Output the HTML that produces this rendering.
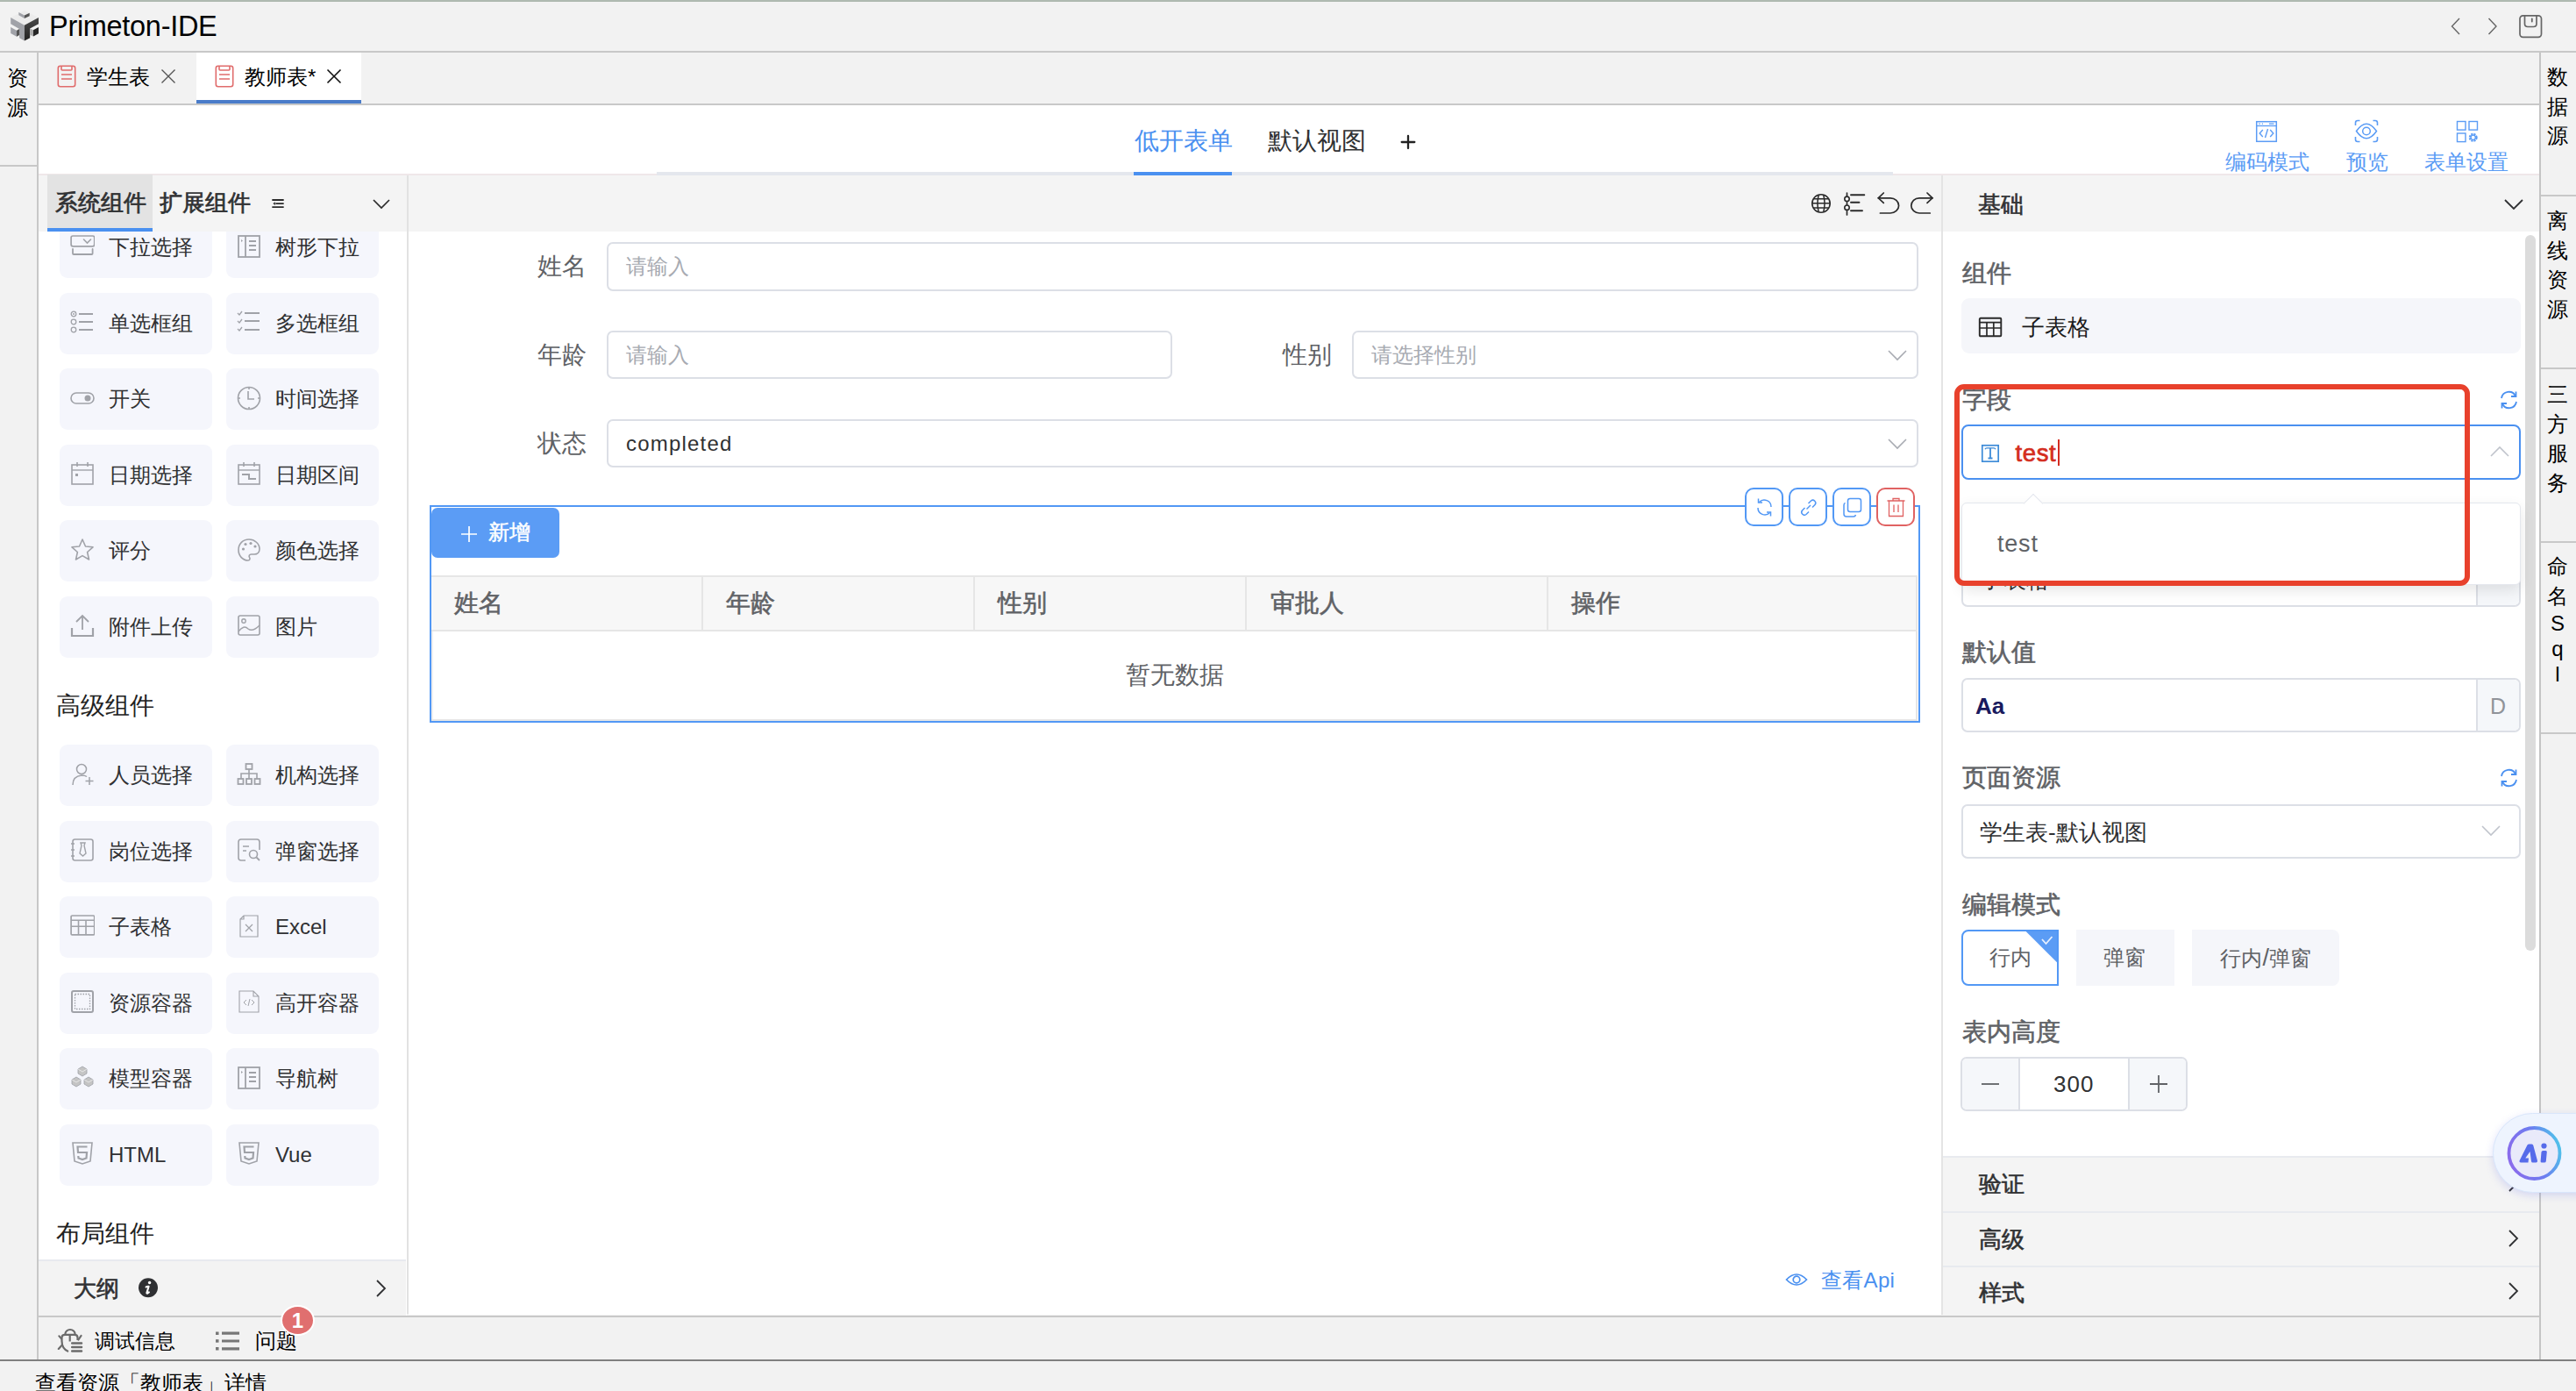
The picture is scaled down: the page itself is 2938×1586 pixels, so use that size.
<!DOCTYPE html>
<html><head><meta charset="utf-8">
<style>
*{box-sizing:border-box;margin:0;padding:0}
html,body{width:2938px;height:1586px;overflow:hidden;background:#f2f2f2;font-family:"Liberation Sans",sans-serif;color:#303133}
.a{position:absolute}
svg{display:block}
.vt{writing-mode:vertical-rl;text-orientation:upright}
.card{position:absolute;width:174px;height:70px;background:#f5f6fc;border-radius:9px}
.card svg{position:absolute;left:12px;top:19.5px}
.card span{position:absolute;left:56px;top:18px;font-size:24px;line-height:34px;color:#303133;white-space:nowrap}
.inp{position:absolute;border:2px solid #dcdfe6;border-radius:7px;background:#fff}
.lbl{position:absolute;font-size:26px;line-height:30px;color:#606266;white-space:nowrap}
.md{-webkit-text-stroke:0.6px currentColor}
.rl{position:absolute;font-size:26px;line-height:30px;color:#606266;font-weight:bold;white-space:nowrap}
</style></head><body>
<!-- top line -->
<div class="a" style="left:0;top:0;width:2938px;height:1px;background:#b1bbb3"></div><div class="a" style="left:0;top:1px;width:2938px;height:1px;background:#a9b5ab"></div>
<!-- title bar -->
<div class="a" style="left:0;top:2px;width:2938px;height:56px;background:#f2f2f2"></div>
<div class="a" style="left:0;top:58px;width:2938px;height:2px;background:#c8c8c8"></div>

<!-- left sidebar -->
<div class="a" style="left:42px;top:60px;width:2px;height:1490px;background:#c8c8c8"></div>
<div class="a" style="left:0;top:188px;width:42px;height:2px;background:#c8c8c8"></div>

<!-- tabs row -->
<div class="a" style="left:44px;top:118px;width:2852px;height:2px;background:#c8c8c8"></div>
<div class="a" style="left:224px;top:60px;width:188px;height:58px;background:#fff"></div>
<div class="a" style="left:224px;top:114px;width:188px;height:4px;background:#4a7cc9"></div>

<!-- main white header area -->
<div class="a" style="left:44px;top:120px;width:2852px;height:79px;background:#fff"></div>

<!-- right sidebar -->
<div class="a" style="left:2896px;top:60px;width:2px;height:1490px;background:#c4c4c4"></div>

<!-- left panel -->
<div class="a" style="left:44px;top:199px;width:420px;height:1301px;background:#fff"></div>
<div class="a" style="left:44px;top:199px;width:420px;height:65px;background:#f4f4f4"></div>
<div class="a" style="left:464px;top:199px;width:2px;height:1299px;background:#e2e2e2"></div>

<!-- center panel -->
<div class="a" style="left:466px;top:199px;width:1748px;height:1300px;background:#fff"></div>
<div class="a" style="left:466px;top:199px;width:1748px;height:65px;background:#f4f4f4"></div>
<div class="a" style="left:2214px;top:199px;width:2px;height:1300px;background:#e4e4e4"></div>

<!-- right panel -->
<div class="a" style="left:2216px;top:199px;width:680px;height:1300px;background:#fff"></div>
<div class="a" style="left:2216px;top:199px;width:680px;height:65px;background:#f4f4f4"></div>

<!-- bottom panel -->
<div class="a" style="left:44px;top:1500px;width:2852px;height:2px;background:#c8c8c8"></div>
<div class="a" style="left:0;top:1550px;width:2938px;height:2px;background:#808080"></div>


<!-- ===== TITLE BAR CONTENT ===== -->
<svg class="a" style="left:0;top:0" width="50" height="50" viewBox="0 0 50 50">
  <defs><linearGradient id="lgr" x1="0" y1="0" x2="0" y2="1"><stop offset="0" stop-color="#4a4a4a"/><stop offset="1" stop-color="#222"/></linearGradient></defs>
  <polygon points="12.2,20.1 27.9,11.9 44,20.1 27.9,28.8" fill="#ececec"/>
  <polygon points="21.3,14 27.9,17.5 27.9,21 21.3,17.3" fill="#a0a2a8"/>
  <polygon points="27.9,17.5 33.7,14.8 33.7,18.2 27.9,21" fill="#555"/>
  <polygon points="12.2,20.1 27.9,28.8 27.9,46.4 22.1,43.3 22.1,33 12.2,27.2" fill="#a0a2a8"/>
  <polygon points="12.2,31 19,34.7 19,41.7 12.2,38" fill="#a0a2a8"/>
  <polygon points="19,34.7 22.1,33 22.1,40 19,41.7" fill="#555"/>
  <polygon points="27.9,28.8 44,20.1 44,27.3 34.2,32.6 34.2,43.3 27.9,46.4" fill="url(#lgr)"/>
  <polygon points="34.2,32.6 38,34.3 38,41.6 34.2,39.8" fill="#aaa"/>
  <polygon points="38,34.3 44,31 44,38.2 38,41.6" fill="#262626"/>
</svg>
<div class="a" style="left:56px;top:10px;font-size:32.5px;line-height:40px;color:#000;letter-spacing:-0.3px">Primeton-IDE</div>
<!-- nav arrows & save -->
<svg class="a" style="left:2794px;top:19px" width="14" height="22" viewBox="0 0 14 22"><path d="M11 2 L2.5 11 L11 20" fill="none" stroke="#666" stroke-width="1.4"/></svg>
<svg class="a" style="left:2836px;top:19px" width="14" height="22" viewBox="0 0 14 22"><path d="M2.5 2 L11 11 L2.5 20" fill="none" stroke="#666" stroke-width="1.4"/></svg>
<svg class="a" style="left:2872px;top:16px" width="28" height="28" viewBox="0 0 28 28"><rect x="2" y="1.8" width="24.5" height="24.5" rx="3.5" fill="none" stroke="#666" stroke-width="1.7"/><path d="M7.5 1.8 V11 Q7.5 14.5 11 14.5 H17.5 Q21 14.5 21 11 V1.8" fill="none" stroke="#666" stroke-width="1.7"/><path d="M15.8 5.5 V8.5" stroke="#666" stroke-width="1.8" stroke-linecap="round"/></svg>
<!-- left sidebar text -->
<div class="a" style="left:7px;top:72px;width:26px;font-size:24px;line-height:33.5px;color:#000;text-align:center">资<br>源</div>

<!-- ===== TABS ===== -->
<svg class="a" style="left:65px;top:74px" width="22" height="26" viewBox="0 0 22 26"><rect x="1.3" y="1.3" width="19.4" height="23.4" rx="2.5" fill="none" stroke="#e06c6c" stroke-width="1.6"/><path d="M5 1.3 V5 Q5 6 6 6 H16 Q17 6 17 5 V1.3" fill="none" stroke="#e06c6c" stroke-width="1.6"/><path d="M5 11 H17 M5 16 H17" stroke="#e06c6c" stroke-width="1.6"/></svg>
<div class="a" style="left:99px;top:68px;font-size:24px;line-height:40px;color:#000">学生表</div>
<svg class="a" style="left:183px;top:78px" width="18" height="18" viewBox="0 0 18 18"><path d="M1.5 1.5 L16.5 16.5 M16.5 1.5 L1.5 16.5" stroke="#555" stroke-width="1.4"/></svg>
<svg class="a" style="left:245px;top:74px" width="22" height="26" viewBox="0 0 22 26"><rect x="1.3" y="1.3" width="19.4" height="23.4" rx="2.5" fill="none" stroke="#e06c6c" stroke-width="1.6"/><path d="M5 1.3 V5 Q5 6 6 6 H16 Q17 6 17 5 V1.3" fill="none" stroke="#e06c6c" stroke-width="1.6"/><path d="M5 11 H17 M5 16 H17" stroke="#e06c6c" stroke-width="1.6"/></svg>
<div class="a" style="left:279px;top:68px;font-size:24px;line-height:40px;color:#000">教师表*</div>
<svg class="a" style="left:372px;top:78px" width="18" height="18" viewBox="0 0 18 18"><path d="M1.5 1.5 L16.5 16.5 M16.5 1.5 L1.5 16.5" stroke="#111" stroke-width="1.6"/></svg>

<!-- right sidebar text -->
<div class="a" style="left:2903px;top:71px;width:28px;font-size:24px;line-height:33.5px;color:#000;text-align:center">数<br>据<br>源</div>
<div class="a" style="left:2898px;top:222px;width:40px;height:2px;background:#c8c8c8"></div>
<div class="a" style="left:2903px;top:235px;width:28px;font-size:24px;line-height:33.5px;color:#000;text-align:center">离<br>线<br>资<br>源</div>
<div class="a" style="left:2898px;top:419px;width:40px;height:2px;background:#c8c8c8"></div>
<div class="a" style="left:2903px;top:433px;width:28px;font-size:24px;line-height:33.5px;color:#000;text-align:center">三<br>方<br>服<br>务</div>
<div class="a" style="left:2898px;top:617px;width:40px;height:2px;background:#c8c8c8"></div>
<div class="a" style="left:2903px;top:629px;width:28px;font-size:24px;line-height:33.5px;color:#000;text-align:center">命<br>名</div><div class="a" style="left:2903px;top:696px;width:28px;font-size:24px;line-height:29px;color:#000;text-align:center">S<br>q<br>l</div>
<div class="a" style="left:2898px;top:835px;width:40px;height:2px;background:#c8c8c8"></div>

<!-- ===== FORM HEADER ===== -->
<div class="a" style="left:44px;top:198px;width:2852px;height:2px;background:#efe7e9"></div>
<div class="a" style="left:749px;top:196px;width:1410px;height:4px;background:#e4e7ed"></div>
<div class="a" style="left:1293.5px;top:140.5px;font-size:28px;line-height:40px;color:#4a90f0">低开表单</div>
<div class="a" style="left:1293px;top:196px;width:112px;height:4px;background:#4a90f0"></div>
<div class="a" style="left:1445.5px;top:140.5px;font-size:28px;line-height:40px;color:#303133">默认视图</div>
<svg class="a" style="left:1597px;top:153px" width="18" height="18" viewBox="0 0 18 18"><path d="M9 2 V16 M1.7 9 H16.3" stroke="#222" stroke-width="2.3" stroke-linecap="round"/></svg>

<!-- header right icons -->
<svg class="a" style="left:2572px;top:137px" width="26" height="26" viewBox="0 0 26 26"><rect x="1.7" y="1.7" width="22.6" height="22.6" fill="none" stroke="#5b9cf5" stroke-width="1.5"/><path d="M1.7 6.5 H24.3" stroke="#5b9cf5" stroke-width="1.3"/><path d="M4.3 4.1 H5.8 M7.8 4.1 H9 M16 4.1 H21.5" stroke="#5b9cf5" stroke-width="1.3"/><path d="M8.8 11 L5.2 15 L8.8 19 M17.2 11 L20.8 15 L17.2 19 M14.5 10 L11.5 20" fill="none" stroke="#5b9cf5" stroke-width="1.4"/></svg>
<div class="a" style="left:2537.5px;top:164.5px;font-size:24px;line-height:40px;color:#5b9cf5">编码模式</div>
<svg class="a" style="left:2685px;top:135.5px" width="28" height="27" viewBox="0 0 28 27"><path d="M1.5 7 V4 Q1.5 1.5 4 1.5 H6.5 M21.5 1.5 H24 Q26.5 1.5 26.5 4 V7 M26.5 20 V23 Q26.5 25.5 24 25.5 H21.5 M6.5 25.5 H4 Q1.5 25.5 1.5 23 V20" fill="none" stroke="#5b9cf5" stroke-width="1.6"/><path d="M2.5 13.5 Q14 -3 25.5 13.5 Q14 30 2.5 13.5 Z" fill="none" stroke="#5b9cf5" stroke-width="1.5"/><circle cx="14" cy="13.5" r="4.3" fill="none" stroke="#5b9cf5" stroke-width="1.5"/></svg>
<div class="a" style="left:2675.5px;top:164.5px;font-size:24px;line-height:40px;color:#5b9cf5">预览</div>
<svg class="a" style="left:2801px;top:137px" width="26" height="26" viewBox="0 0 26 26"><rect x="1.5" y="1.5" width="9.5" height="9.6" fill="none" stroke="#5b9cf5" stroke-width="1.4"/><rect x="15" y="1.5" width="9.5" height="9.6" fill="none" stroke="#5b9cf5" stroke-width="1.4"/><rect x="1.5" y="15" width="9.5" height="9.6" fill="none" stroke="#5b9cf5" stroke-width="1.4"/><circle cx="19.7" cy="19.8" r="3.9" fill="none" stroke="#5b9cf5" stroke-width="2.2" stroke-dasharray="2.1 1"/><circle cx="19.7" cy="19.8" r="2.6" fill="none" stroke="#5b9cf5" stroke-width="1.3"/></svg>
<div class="a" style="left:2765px;top:164.5px;font-size:24px;line-height:40px;color:#5b9cf5">表单设置</div>

<!-- ===== LEFT PANEL CONTENT ===== -->
<div class="a" style="left:44px;top:264px;width:419px;height:1172px;overflow:hidden">
<div class="card" style="left:24px;top:-17px"><svg width="28" height="28" viewBox="0 0 28 28"><rect x="1.1" y="2" width="26.6" height="11.8" rx="2" fill="none" stroke="#a0a2a8" stroke-width="1.7"/><path d="M15.5 6 L19.5 10 L23.5 6" fill="none" stroke="#a0a2a8" stroke-width="1.6" stroke-linecap="round"/><path d="M3 17 V22 Q3 23 4 23 H24.6 Q25.6 23 25.6 22 V17" fill="none" stroke="#a0a2a8" stroke-width="1.8" stroke-linecap="round"/></svg><span>下拉选择</span></div>
<div class="card" style="left:214px;top:-17px"><svg width="28" height="28" viewBox="0 0 28 28"><rect x="2" y="2" width="24" height="24" fill="none" stroke="#a0a2a8" stroke-width="1.8"/><path d="M10 2 V26" stroke="#a0a2a8" stroke-width="1.8"/><path d="M5 6 L7 7.5 L5 9 Z" fill="#a0a2a8"/><path d="M14 8 H22 M14 13 H22 M14 18 H22" stroke="#a0a2a8" stroke-width="1.8"/></svg><span>树形下拉</span></div>
<div class="card" style="left:24px;top:69.5px"><svg width="28" height="28" viewBox="0 0 28 28"><circle cx="4" cy="5" r="2.8" fill="none" stroke="#a0a2a8" stroke-width="1.3"/><circle cx="4" cy="5" r="1" fill="#a0a2a8"/><circle cx="4" cy="14" r="2.8" fill="none" stroke="#a0a2a8" stroke-width="1.3"/><circle cx="4" cy="23" r="2.8" fill="none" stroke="#a0a2a8" stroke-width="1.3"/><path d="M10 5 H26 M10 14 H26 M10 23 H26" stroke="#a0a2a8" stroke-width="1.8"/></svg><span>单选框组</span></div>
<div class="card" style="left:214px;top:69.5px"><svg width="28" height="28" viewBox="0 0 28 28"><path d="M1 4 L3 6 L6 2 M1 13 L3 15 L6 11 M1 22 L3 24 L6 20" fill="none" stroke="#a0a2a8" stroke-width="1.3"/><path d="M9 4 H26 M9 13 H26 M9 23 H26" stroke="#a0a2a8" stroke-width="1.8"/></svg><span>多选框组</span></div>
<div class="card" style="left:24px;top:156px"><svg width="28" height="28" viewBox="0 0 28 28"><rect x="1" y="8" width="26" height="12" rx="6" fill="none" stroke="#a0a2a8" stroke-width="1.6"/><circle cx="20" cy="14" r="3.5" fill="#a0a2a8"/></svg><span>开关</span></div>
<div class="card" style="left:214px;top:156px"><svg width="28" height="28" viewBox="0 0 28 28"><circle cx="14" cy="14" r="12.5" fill="none" stroke="#a0a2a8" stroke-width="1.6"/><path d="M13 6 V15 H20" fill="none" stroke="#a0a2a8" stroke-width="1.6"/><path d="M14 1.5 V4 M14 24 V26.5 M1.5 14 H4 M24 14 H26.5" stroke="#a0a2a8" stroke-width="1.6"/></svg><span>时间选择</span></div>
<div class="card" style="left:24px;top:242.5px"><svg width="28" height="28" viewBox="0 0 28 28"><rect x="2" y="4" width="24" height="22" fill="none" stroke="#a0a2a8" stroke-width="1.6"/><path d="M2 10 H26" stroke="#a0a2a8" stroke-width="1.4"/><path d="M8 1 V6 M20 1 V6" stroke="#a0a2a8" stroke-width="1.6"/><rect x="6" y="14" width="3" height="3" fill="#a0a2a8"/></svg><span>日期选择</span></div>
<div class="card" style="left:214px;top:242.5px"><svg width="28" height="28" viewBox="0 0 28 28"><rect x="2" y="4" width="24" height="22" fill="none" stroke="#a0a2a8" stroke-width="1.6"/><path d="M2 10 H26" stroke="#a0a2a8" stroke-width="1.4"/><path d="M8 1 V6 M20 1 V6" stroke="#a0a2a8" stroke-width="1.6"/><path d="M6 15 H14 V20 H22" fill="none" stroke="#a0a2a8" stroke-width="2"/></svg><span>日期区间</span></div>
<div class="card" style="left:24px;top:329px"><svg width="28" height="28" viewBox="0 0 28 28"><path d="M14 2 L17.5 10 L26 10.8 L19.6 16.5 L21.5 25 L14 20.6 L6.5 25 L8.4 16.5 L2 10.8 L10.5 10 Z" fill="none" stroke="#a0a2a8" stroke-width="1.6" stroke-linejoin="round"/></svg><span>评分</span></div>
<div class="card" style="left:214px;top:329px"><svg width="28" height="28" viewBox="0 0 28 28"><path d="M14 2 C7 2 2 7 2 14 C2 21 7 26 13 26 C15 26 15.5 24 14.5 22.5 C13.5 21 14.5 19 16.5 19 H20 C23.5 19 26 16.5 26 13 C26 7 20.5 2 14 2 Z" fill="none" stroke="#a0a2a8" stroke-width="1.6"/><circle cx="7.5" cy="13" r="1.6" fill="#a0a2a8"/><circle cx="10" cy="7.5" r="1.6" fill="#a0a2a8"/><circle cx="16" cy="6.5" r="1.6" fill="#a0a2a8"/><circle cx="21" cy="10" r="1.6" fill="#a0a2a8"/></svg><span>颜色选择</span></div>
<div class="card" style="left:24px;top:415.5px"><svg width="28" height="28" viewBox="0 0 28 28"><path d="M14 3 V19 M7 10 L14 3 L21 10" fill="none" stroke="#a0a2a8" stroke-width="1.8"/><path d="M2 17 V26 H26 V17" fill="none" stroke="#a0a2a8" stroke-width="2.2"/></svg><span>附件上传</span></div>
<div class="card" style="left:214px;top:415.5px"><svg width="28" height="28" viewBox="0 0 28 28"><rect x="2" y="3" width="24" height="22" rx="2" fill="none" stroke="#a0a2a8" stroke-width="1.6"/><circle cx="8" cy="9" r="2.2" fill="none" stroke="#a0a2a8" stroke-width="1.4"/><path d="M2 21 Q8 13 13 18 Q18 22 26 14" fill="none" stroke="#a0a2a8" stroke-width="1.4"/></svg><span>图片</span></div>
<div class="card" style="left:24px;top:585px"><svg width="28" height="28" viewBox="0 0 28 28"><circle cx="13" cy="8" r="5.5" fill="none" stroke="#a0a2a8" stroke-width="1.5"/><path d="M3 26 Q3 16 13 15 Q17 15 19 16.5" fill="none" stroke="#a0a2a8" stroke-width="1.5"/><path d="M22 17 V26 M17.5 21.5 H26.5" stroke="#a0a2a8" stroke-width="1.5"/></svg><span>人员选择</span></div>
<div class="card" style="left:214px;top:585px"><svg width="28" height="28" viewBox="0 0 28 28"><rect x="10.5" y="2" width="7" height="6" fill="none" stroke="#a0a2a8" stroke-width="1.8"/><path d="M14 8 V13 M5 19 V13 H23 V19 M14 13 V19" fill="none" stroke="#a0a2a8" stroke-width="1.6"/><rect x="1.5" y="19" width="6" height="6" fill="none" stroke="#a0a2a8" stroke-width="1.8"/><rect x="11" y="19" width="6" height="6" fill="none" stroke="#a0a2a8" stroke-width="1.8"/><rect x="20.5" y="19" width="6" height="6" fill="none" stroke="#a0a2a8" stroke-width="1.8"/></svg><span>机构选择</span></div>
<div class="card" style="left:24px;top:671.5px"><svg width="28" height="28" viewBox="0 0 28 28"><rect x="3" y="2" width="23" height="24" rx="2.5" fill="none" stroke="#a0a2a8" stroke-width="1.6"/><path d="M1 7 H5 M1 14 H5 M1 21 H5" stroke="#a0a2a8" stroke-width="1.4"/><path d="M12 6 H17 L16 9 L18 18 L14.5 21 L11 18 L13 9 Z" fill="none" stroke="#a0a2a8" stroke-width="1.4"/></svg><span>岗位选择</span></div>
<div class="card" style="left:214px;top:671.5px"><svg width="28" height="28" viewBox="0 0 28 28"><path d="M26 14 V5 Q26 2 23 2 H5 Q2 2 2 5 V23 Q2 26 5 26 H10" fill="none" stroke="#a0a2a8" stroke-width="1.6"/><path d="M7 10 H14 M7 15 H11" stroke="#a0a2a8" stroke-width="1.6"/><circle cx="19" cy="19" r="4.5" fill="none" stroke="#a0a2a8" stroke-width="1.6"/><path d="M22.5 22.5 L26 26" stroke="#a0a2a8" stroke-width="1.8"/></svg><span>弹窗选择</span></div>
<div class="card" style="left:24px;top:758px"><svg width="28" height="28" viewBox="0 0 28 28"><rect x="1.1" y="2" width="26.6" height="21.9" rx="1.2" fill="none" stroke="#a0a2a8" stroke-width="1.7"/><path d="M1.1 7.3 H27.7 M1.1 14.2 H27.7 M9.5 7.3 V23.9 M18 7.3 V23.9" stroke="#a0a2a8" stroke-width="1.6"/></svg><span>子表格</span></div>
<div class="card" style="left:214px;top:758px"><svg width="28" height="28" viewBox="0 0 28 28"><path d="M8 2 H24 V26 H4 V6 Z M4 6 H8 V2" fill="none" stroke="#a0a2a8" stroke-width="1.2"/><path d="M10 12 L18 20 M18 12 L10 20" stroke="#a0a2a8" stroke-width="1.2"/></svg><span>Excel</span></div>
<div class="card" style="left:24px;top:844.5px"><svg width="28" height="28" viewBox="0 0 28 28"><rect x="2" y="2" width="24" height="24" rx="2" fill="none" stroke="#a0a2a8" stroke-width="2"/><rect x="5.5" y="5.5" width="17" height="17" fill="none" stroke="#a0a2a8" stroke-width="1.3" stroke-dasharray="1.5 1.5"/></svg><span>资源容器</span></div>
<div class="card" style="left:214px;top:844.5px"><svg width="28" height="28" viewBox="0 0 28 28"><path d="M3 2 H19 L25 8 V26 H3 Z M19 2 V8 H25" fill="none" stroke="#a0a2a8" stroke-width="1.1"/><path d="M11 12 L8 15 L11 18 M17 12 L20 15 L17 18 M15 11 L13 19" fill="none" stroke="#a0a2a8" stroke-width="1"/></svg><span>高开容器</span></div>
<div class="card" style="left:24px;top:931px"><svg width="28" height="28" viewBox="0 0 28 28"><path d="M14 1 L19 4 V9 L14 12 L9 9 V4 Z" fill="#c4c4c4" stroke="#a0a2a8" stroke-width="0.8"/><path d="M7 13 L12 16 V21 L7 24 L2 21 V16 Z" fill="#c4c4c4" stroke="#a0a2a8" stroke-width="0.8"/><path d="M21 13 L26 16 V21 L21 24 L16 21 V16 Z" fill="#c4c4c4" stroke="#a0a2a8" stroke-width="0.8"/><path d="M9 4 L14 7 L19 4 M2 16 L7 19 L12 16 M16 16 L21 19 L26 16" fill="none" stroke="#eee" stroke-width="0.8"/></svg><span>模型容器</span></div>
<div class="card" style="left:214px;top:931px"><svg width="28" height="28" viewBox="0 0 28 28"><rect x="2" y="2" width="24" height="24" fill="none" stroke="#a0a2a8" stroke-width="1.8"/><path d="M10 2 V26" stroke="#a0a2a8" stroke-width="1.8"/><path d="M5 6 L7 7.5 L5 9 Z" fill="#a0a2a8"/><path d="M14 8 H22 M14 13 H22 M14 18 H22" stroke="#a0a2a8" stroke-width="1.8"/></svg><span>导航树</span></div>
<div class="card" style="left:24px;top:1017.5px"><svg width="28" height="28" viewBox="0 0 28 28"><path d="M3 2 H25 L23 23 L14 26 L5 23 Z" fill="none" stroke="#a0a2a8" stroke-width="1.6"/><path d="M19.5 6.5 H8.5 L9 13 H19 L18.5 19.5 L14 21 L9.5 19.5 L9.3 17" fill="none" stroke="#a0a2a8" stroke-width="2.2"/></svg><span>HTML</span></div>
<div class="card" style="left:214px;top:1017.5px"><svg width="28" height="28" viewBox="0 0 28 28"><path d="M3 2 H25 L23 23 L14 26 L5 23 Z" fill="none" stroke="#a0a2a8" stroke-width="1.6"/><path d="M19.5 6.5 H8.5 L9 13 H19 L18.5 19.5 L14 21 L9.5 19.5 L9.3 17" fill="none" stroke="#a0a2a8" stroke-width="2.2"/></svg><span>Vue</span></div>
<div class="a" style="left:20px;top:521px;font-size:28px;line-height:40px;color:#222">高级组件</div>
<div class="a" style="left:20px;top:1123px;font-size:28px;line-height:40px;color:#222">布局组件</div>
</div>
<div class="a" style="left:54px;top:199px;width:120px;height:61px;background:#e3e3e3"></div>
<div class="a" style="left:54px;top:260px;width:120px;height:4px;background:#4a90f0"></div>
<div class="a" style="left:63px;top:211px;font-size:26px;line-height:40px;color:#303133;-webkit-text-stroke:0.7px #303133">系统组件</div>
<div class="a" style="left:182px;top:211px;font-size:26px;line-height:40px;color:#303133;-webkit-text-stroke:0.7px #303133">扩展组件</div>
<svg class="a" style="left:310px;top:226px" width="15" height="12" viewBox="0 0 15 12"><path d="M1 2 H13 M5 6.1 H13 M1 10.1 H13" stroke="#2b2b2b" stroke-width="1.8" stroke-linecap="round"/><path d="M1.3 6.1 L3.8 4.3 V7.9 Z" fill="#2b2b2b"/></svg>
<svg class="a" style="left:423.5px;top:225.5px" width="22" height="14" viewBox="0 0 22 14"><path d="M2 2 L11 11 L20 2" fill="none" stroke="#2b2b2b" stroke-width="1.7"/></svg>
<div class="a" style="left:44px;top:1436px;width:419px;height:64px;background:#f3f3f3;border-top:2px solid #e8eaef"></div>
<div class="a" style="left:84px;top:1449px;font-size:26px;line-height:40px;color:#303133;-webkit-text-stroke:0.6px #303133">大纲</div>
<svg class="a" style="left:157px;top:1457px" width="24" height="24" viewBox="0 0 24 24"><circle cx="12" cy="11.2" r="11" fill="#2f3033"/><circle cx="13.6" cy="5.5" r="1.7" fill="#fff"/><path d="M9.6 10.4 Q11.3 9.4 12.6 9.8 L10.4 17 Q10.3 18.1 11.4 17.5 L12.9 16.4" fill="none" stroke="#fff" stroke-width="2.1" stroke-linejoin="round" stroke-linecap="round"/></svg>
<svg class="a" style="left:428px;top:1458px" width="14" height="22" viewBox="0 0 14 22"><path d="M2 2 L11 11 L2 20" fill="none" stroke="#303133" stroke-width="1.8"/></svg>
<!-- ===== CENTER CONTENT ===== -->
<svg class="a" style="left:2065px;top:220px" width="24" height="24" viewBox="0 0 24 24"><circle cx="12" cy="12" r="10.2" fill="none" stroke="#2b2b2b" stroke-width="1.6"/><path d="M9.3 2.2 Q6.6 12 9.3 21.8 M14.7 2.2 Q17.4 12 14.7 21.8" fill="none" stroke="#2b2b2b" stroke-width="1.5"/><path d="M3 6.8 H21 M1.8 11.8 H22.2 M3 17 H21" stroke="#2b2b2b" stroke-width="1.5"/></svg><svg class="a" style="left:2102px;top:219px" width="26" height="27" viewBox="0 0 26 27"><path d="M4.5 1 V26" stroke="#2b2b2b" stroke-width="1.7" stroke-linecap="round"/><circle cx="4.5" cy="7.8" r="2.7" fill="#f4f4f4" stroke="#2b2b2b" stroke-width="1.6"/><circle cx="4.5" cy="17.7" r="2.7" fill="#f4f4f4" stroke="#2b2b2b" stroke-width="1.6"/><path d="M9 3.3 H24.3 M9 11.7 H18.5 M9 21.2 H22" stroke="#2b2b2b" stroke-width="1.9" stroke-linecap="round"/></svg><svg class="a" style="left:2139px;top:218px" width="30" height="28" viewBox="0 0 30 28"><path d="M9.3 2 L3.3 7.8 L9.3 13.4" fill="none" stroke="#2b2b2b" stroke-width="1.7" stroke-linecap="round"/><path d="M3.3 7.8 H17 A9.6 8.6 0 0 1 17 25 H5.4" fill="none" stroke="#2b2b2b" stroke-width="1.7" stroke-linecap="round"/></svg><svg class="a" style="left:2177px;top:218px" width="30" height="28" viewBox="0 0 30 28"><path d="M21 2 L27 7.8 L21 13.4" fill="none" stroke="#2b2b2b" stroke-width="1.7" stroke-linecap="round"/><path d="M27 7.8 H12 A9.2 8.6 0 0 0 12 25 H24.3" fill="none" stroke="#2b2b2b" stroke-width="1.7" stroke-linecap="round"/></svg>
<div class="a" style="left:613px;top:284px;font-size:28px;line-height:40px;color:#606266">姓名</div>
<div class="inp" style="left:692px;top:276px;width:1496px;height:56px"></div>
<div class="a" style="left:714px;top:284px;font-size:24px;line-height:40px;color:#a8abb2">请输入</div>
<div class="a" style="left:613px;top:385px;font-size:28px;line-height:40px;color:#606266">年龄</div>
<div class="inp" style="left:692px;top:377px;width:645px;height:55px"></div>
<div class="a" style="left:714px;top:385px;font-size:24px;line-height:40px;color:#a8abb2">请输入</div>
<div class="a" style="left:1463px;top:385px;font-size:28px;line-height:40px;color:#606266">性别</div>
<div class="inp" style="left:1542px;top:377px;width:646px;height:55px"></div>
<div class="a" style="left:1564px;top:385px;font-size:24px;line-height:40px;color:#a8abb2">请选择性别</div>
<svg class="a" style="left:2152px;top:398px" width="24" height="14" viewBox="0 0 24 14"><path d="M2 2 L12 12 L22 2" fill="none" stroke="#a8abb2" stroke-width="1.6"/></svg>
<div class="a" style="left:613px;top:486px;font-size:28px;line-height:40px;color:#606266">状态</div>
<div class="inp" style="left:692px;top:478px;width:1496px;height:55px"></div>
<div class="a" style="left:714px;top:486px;font-size:24px;line-height:40px;color:#303133;letter-spacing:1.2px">completed</div>
<svg class="a" style="left:2152px;top:499px" width="24" height="14" viewBox="0 0 24 14"><path d="M2 2 L12 12 L22 2" fill="none" stroke="#a8abb2" stroke-width="1.6"/></svg>
<div class="a" style="left:490px;top:576px;width:1700px;height:248px;border:2px solid #5298f5"></div>
<div class="a" style="left:492px;top:579px;width:146px;height:57px;background:#5b9cf5;border-radius:7px"></div>
<svg class="a" style="left:525px;top:599px" width="20" height="20" viewBox="0 0 20 20"><path d="M10 1 V19 M1 10 H19" stroke="#fff" stroke-width="1.7"/></svg>
<div class="a" style="left:557px;top:587px;font-size:24px;line-height:40px;color:#fff;-webkit-text-stroke:0.5px #fff">新增</div>
<div class="a" style="left:492px;top:656px;width:1694px;height:64px;background:#f7f7f7;border-top:2px solid #e6e6e6;border-bottom:2px solid #e6e6e6"></div>
<div class="a" style="left:800px;top:656px;width:2px;height:64px;background:#e6e6e6"></div>
<div class="a" style="left:1110px;top:656px;width:2px;height:64px;background:#e6e6e6"></div>
<div class="a" style="left:1420px;top:656px;width:2px;height:64px;background:#e6e6e6"></div>
<div class="a" style="left:1764px;top:656px;width:2px;height:64px;background:#e6e6e6"></div>
<div class="a" style="left:2185px;top:656px;width:2px;height:166px;background:#e6e6e6"></div>
<div class="a" style="left:492px;top:720px;width:2px;height:102px;background:#f0f0f0"></div>
<div class="a" style="left:492px;top:820px;width:1694px;height:2px;background:#e6e6e6"></div>
<div class="a" style="left:517.5px;top:668px;font-size:28px;line-height:40px;color:#606266;-webkit-text-stroke:0.6px #606266">姓名</div>
<div class="a" style="left:827.5px;top:668px;font-size:28px;line-height:40px;color:#606266;-webkit-text-stroke:0.6px #606266">年龄</div>
<div class="a" style="left:1137.5px;top:668px;font-size:28px;line-height:40px;color:#606266;-webkit-text-stroke:0.6px #606266">性别</div>
<div class="a" style="left:1449px;top:668px;font-size:28px;line-height:40px;color:#606266;-webkit-text-stroke:0.6px #606266">审批人</div>
<div class="a" style="left:1791.5px;top:668px;font-size:28px;line-height:40px;color:#606266;-webkit-text-stroke:0.6px #606266">操作</div>
<div class="a" style="left:1284px;top:750px;font-size:28px;line-height:40px;color:#606266">暂无数据</div>
<div class="a" style="left:1990px;top:556px;width:43.5px;height:43.5px;border:2px solid #5298f5;border-radius:10px;background:#fff"></div><svg class="a" style="left:2000.5px;top:567px" width="23" height="23" viewBox="0 0 23 23"><path d="M19 11 A7.8 7.8 0 0 0 5.5 5.5 M4 12 A7.8 7.8 0 0 0 17.5 17.5" fill="none" stroke="#5298f5" stroke-width="1.5"/><path d="M4.5 1.5 V6 H9 M18.5 21.5 V17 H14" fill="none" stroke="#5298f5" stroke-width="1.5"/></svg>
<div class="a" style="left:2040px;top:556px;width:43.5px;height:43.5px;border:2px solid #5298f5;border-radius:10px;background:#fff"></div><svg class="a" style="left:2050.5px;top:567px" width="23" height="23" viewBox="0 0 23 23"><path d="M9.5 13.5 L14 9" stroke="#5298f5" stroke-width="1.5"/><path d="M7.5 12 L4.5 15 A3.2 3.2 0 0 0 9 19.5 L12 16.5 M11.5 7 L14.5 4 A3.2 3.2 0 0 1 19 8.5 L16 11.5" fill="none" stroke="#5298f5" stroke-width="1.5"/></svg>
<div class="a" style="left:2090px;top:556px;width:43.5px;height:43.5px;border:2px solid #5298f5;border-radius:10px;background:#fff"></div><svg class="a" style="left:2100.5px;top:567px" width="23" height="23" viewBox="0 0 23 23"><rect x="6.5" y="1.5" width="15" height="15" rx="2.5" fill="none" stroke="#5298f5" stroke-width="1.5"/><path d="M3.5 6.5 Q2 7 2 9 V19 Q2 22 5 22 H13 Q15 22 15.5 20" fill="none" stroke="#5298f5" stroke-width="1.5"/></svg>
<div class="a" style="left:2140px;top:556px;width:43.5px;height:43.5px;border:2px solid #e06262;border-radius:10px;background:#fff"></div><svg class="a" style="left:2150.5px;top:567px" width="23" height="23" viewBox="0 0 23 23"><path d="M1.5 4 H21.5 M8 4 V1.5 H15 V4" fill="none" stroke="#e06262" stroke-width="1.3"/><path d="M3.5 4 V21.5 H19.5 V4" fill="none" stroke="#e06262" stroke-width="1.3"/><path d="M9 8.5 V17 M14 8.5 V17" stroke="#e06262" stroke-width="1.3"/></svg>
<svg class="a" style="left:2036px;top:1449px" width="26" height="20" viewBox="0 0 26 20"><path d="M1.5 10 Q13 -2 24.5 10 Q13 22 1.5 10 Z" fill="none" stroke="#4a90f0" stroke-width="1.7"/><circle cx="13" cy="10" r="3.8" fill="none" stroke="#4a90f0" stroke-width="1.7"/></svg>
<div class="a" style="left:2077px;top:1440px;font-size:24px;line-height:40px;color:#4a90f0;letter-spacing:0.3px">查看Api</div>
<!-- ===== RIGHT PANEL CONTENT ===== -->
<div class="a" style="left:2256px;top:213px;font-size:26px;line-height:40px;color:#303133;-webkit-text-stroke:0.6px #303133">基础</div>
<svg class="a" style="left:2855px;top:226px" width="24" height="14" viewBox="0 0 24 14"><path d="M2 2 L12 12 L22 2" fill="none" stroke="#303133" stroke-width="1.8"/></svg>
<div class="a" style="left:2880px;top:268px;width:12px;height:816px;background:#dcdcdc;border-radius:6px"></div>
<div class="a" style="left:2238px;top:292px;font-size:28px;line-height:40px;color:#606266;-webkit-text-stroke:0.6px #606266">组件</div>
<div class="a" style="left:2237px;top:340px;width:638px;height:63px;background:#f5f6fa;border-radius:9px"></div>
<svg class="a" style="left:2256px;top:361px" width="28" height="24" viewBox="0 0 28 24"><rect x="1.8" y="1.8" width="24.5" height="20.5" rx="1" fill="none" stroke="#2a2a2a" stroke-width="1.9"/><path d="M1.8 6.7 H26.3 M1.8 13 H26.3 M10 6.7 V22.3 M17.8 6.7 V22.3" stroke="#2a2a2a" stroke-width="1.7"/></svg>
<div class="a" style="left:2306px;top:353px;font-size:26px;line-height:40px;color:#1a1a1a">子表格</div>
<div class="a" style="left:2238px;top:436px;font-size:28px;line-height:40px;color:#606266;-webkit-text-stroke:0.6px #606266">字段</div>
<svg class="a" style="left:2850px;top:445px" width="23" height="22" viewBox="0 0 23 22"><path d="M3 9 A8.5 8.5 0 0 1 19 6.5 M20 13 A8.5 8.5 0 0 1 4 15.5" fill="none" stroke="#4a90f0" stroke-width="1.8"/><path d="M19.5 1.5 V7 H14 M3.5 20.5 V15 H9" fill="none" stroke="#4a90f0" stroke-width="1.8"/></svg>
<div class="inp" style="left:2237px;top:630px;width:638px;height:62px"></div>
<div class="a" style="left:2824px;top:632px;width:49px;height:58px;background:#f5f7fa;border-left:2px solid #dcdfe6;border-radius:0 6px 6px 0"></div>
<div class="a" style="left:2239px;top:632px;width:584px;height:58px;overflow:hidden"><div class="a" style="left:20px;top:9px;font-size:26px;line-height:40px;color:#303133">子表格</div></div>
<div class="a" style="left:2237px;top:484px;width:638px;height:63px;border:2px solid #4a90f0;border-radius:8px;background:#fff"></div>
<svg class="a" style="left:2259px;top:506px" width="22" height="22" viewBox="0 0 22 22"><rect x="1.8" y="1.8" width="18.4" height="18.4" fill="none" stroke="#3d8bd8" stroke-width="1.7"/><path d="M5 6.3 Q5.5 4.8 7 4.8 H15 Q16.5 4.8 17 6.3" fill="none" stroke="#3d8bd8" stroke-width="1.3"/><path d="M11 5 V16.5 M8.5 16.5 H13.5" fill="none" stroke="#3d8bd8" stroke-width="1.8"/></svg>
<div class="a" style="left:2298.5px;top:497px;font-size:27.5px;line-height:40px;color:#d42d20;-webkit-text-stroke:0.7px #d42d20;letter-spacing:0.6px">test</div>
<div class="a" style="left:2346.5px;top:501px;width:2px;height:30px;background:#d42d20"></div>
<svg class="a" style="left:2839px;top:508px" width="24" height="14" viewBox="0 0 24 14"><path d="M2 12 L12 2 L22 12" fill="none" stroke="#c0c4cc" stroke-width="1.6"/></svg>
<div class="a" style="left:2237px;top:573px;width:638px;height:94px;background:#fff;border:1.5px solid #e4e7ed;border-radius:6px;box-shadow:0 6px 16px rgba(0,0,0,0.10)"></div>
<div class="a" style="left:2311px;top:566px;width:16px;height:16px;background:#fff;border-left:1.5px solid #e4e7ed;border-top:1.5px solid #e4e7ed;transform:rotate(45deg)"></div>
<div class="a" style="left:2278px;top:600px;font-size:27px;line-height:40px;color:#606266;letter-spacing:0.8px">test</div>
<div class="a" style="left:2228.5px;top:437.5px;width:588.5px;height:230.5px;border:6px solid #e8412c;border-radius:11px"></div>
<div class="a" style="left:2238px;top:724px;font-size:28px;line-height:40px;color:#606266;-webkit-text-stroke:0.6px #606266">默认值</div>
<div class="inp" style="left:2237px;top:773px;width:638px;height:62px"></div>
<div class="a" style="left:2824px;top:775px;width:49px;height:58px;background:#f5f7fa;border-left:2px solid #dcdfe6;border-radius:0 6px 6px 0"></div>
<div class="a" style="left:2253px;top:785px;font-size:26px;line-height:40px;color:#1a1a5e;font-weight:bold">Aa</div>
<div class="a" style="left:2840px;top:785px;font-size:25px;line-height:40px;color:#909399">D</div>
<div class="a" style="left:2238px;top:867px;font-size:28px;line-height:40px;color:#606266;-webkit-text-stroke:0.6px #606266">页面资源</div>
<svg class="a" style="left:2850px;top:876px" width="23" height="22" viewBox="0 0 23 22"><path d="M3 9 A8.5 8.5 0 0 1 19 6.5 M20 13 A8.5 8.5 0 0 1 4 15.5" fill="none" stroke="#4a90f0" stroke-width="1.8"/><path d="M19.5 1.5 V7 H14 M3.5 20.5 V15 H9" fill="none" stroke="#4a90f0" stroke-width="1.8"/></svg>
<div class="inp" style="left:2237px;top:917px;width:638px;height:62px"></div>
<div class="a" style="left:2258px;top:929px;font-size:26px;line-height:40px;color:#303133">学生表-默认视图</div>
<svg class="a" style="left:2829px;top:940px" width="24" height="14" viewBox="0 0 24 14"><path d="M2 2 L12 12 L22 2" fill="none" stroke="#c0c4cc" stroke-width="1.6"/></svg>
<div class="a" style="left:2238px;top:1012px;font-size:28px;line-height:40px;color:#606266;-webkit-text-stroke:0.6px #606266">编辑模式</div>
<div class="a" style="left:2236.5px;top:1060px;width:111.5px;height:64px;border:2px solid #5298f5;border-radius:8px 0 0 8px;background:#fff;overflow:hidden"><div class="a" style="right:-25px;top:-25px;width:50px;height:50px;background:#5b9cf5;transform:rotate(45deg)"></div></div>
<svg class="a" style="left:2327px;top:1066px" width="18" height="14" viewBox="0 0 18 14"><path d="M2 5 L6.5 10 L13.5 2" fill="none" stroke="#e8f0fd" stroke-width="1.8"/></svg>
<div class="a" style="left:2268.5px;top:1072px;font-size:24px;line-height:40px;color:#606266">行内</div>
<div class="a" style="left:2368px;top:1060px;width:112px;height:64px;background:#f5f6fa"></div>
<div class="a" style="left:2399px;top:1072px;font-size:24px;line-height:40px;color:#606266">弹窗</div>
<div class="a" style="left:2500px;top:1060px;width:168px;height:64px;background:#f5f6fa;border-radius:0 8px 8px 0"></div>
<div class="a" style="left:2532px;top:1072px;font-size:24px;line-height:40px;color:#606266;white-space:nowrap">行内<span style="font-size:27px;margin:0 0 0 0.5px">/</span>弹窗</div>
<div class="a" style="left:2238px;top:1157px;font-size:28px;line-height:40px;color:#606266;-webkit-text-stroke:0.6px #606266">表内高度</div>
<div class="inp" style="left:2236px;top:1205px;width:259px;height:62px;overflow:hidden"><div class="a" style="left:0;top:0;width:66px;height:58px;background:#f5f7fa;border-right:2px solid #dcdfe6"></div><div class="a" style="right:0;top:0;width:66px;height:58px;background:#f5f7fa;border-left:2px solid #dcdfe6"></div></div>
<svg class="a" style="left:2259px;top:1234px" width="22" height="4" viewBox="0 0 22 4"><path d="M1 2 H21" stroke="#606266" stroke-width="1.8"/></svg>
<svg class="a" style="left:2451px;top:1225px" width="22" height="22" viewBox="0 0 22 22"><path d="M11 1 V21 M1 11 H21" stroke="#606266" stroke-width="1.8"/></svg>
<div class="a" style="left:2342px;top:1216px;font-size:26px;line-height:40px;color:#303133;letter-spacing:1px">300</div>
<div class="a" style="left:2216px;top:1318px;width:680px;height:63px;background:#f4f4f4;border-top:2px solid #e8eaef"></div>
<div class="a" style="left:2257px;top:1330px;font-size:26px;line-height:40px;color:#303133;-webkit-text-stroke:0.6px #303133">验证</div>
<svg class="a" style="left:2860px;top:1338px" width="14" height="22" viewBox="0 0 14 22"><path d="M2 2 L11 11 L2 20" fill="none" stroke="#303133" stroke-width="1.8"/></svg>
<div class="a" style="left:2216px;top:1381px;width:680px;height:62px;background:#f4f4f4;border-top:2px solid #e8eaef"></div>
<div class="a" style="left:2257px;top:1393px;font-size:26px;line-height:40px;color:#303133;-webkit-text-stroke:0.6px #303133">高级</div>
<svg class="a" style="left:2860px;top:1401px" width="14" height="22" viewBox="0 0 14 22"><path d="M2 2 L11 11 L2 20" fill="none" stroke="#303133" stroke-width="1.8"/></svg>
<div class="a" style="left:2216px;top:1443px;width:680px;height:57px;background:#f4f4f4;border-top:2px solid #e8eaef"></div>
<div class="a" style="left:2257px;top:1454px;font-size:26px;line-height:40px;color:#303133;-webkit-text-stroke:0.6px #303133">样式</div>
<svg class="a" style="left:2860px;top:1461px" width="14" height="22" viewBox="0 0 14 22"><path d="M2 2 L11 11 L2 20" fill="none" stroke="#303133" stroke-width="1.8"/></svg>
<div class="a" style="left:2842.5px;top:1269px;width:140px;height:91px;border-radius:45.5px;background:#eef4fe;border:1.5px solid #d9e6fb;box-shadow:0 3px 10px rgba(100,110,230,0.22)"></div>
<svg class="a" style="left:2858px;top:1283px" width="64" height="64" viewBox="0 0 64 64"><defs><linearGradient id="aig" x1="0" y1="0.6" x2="1" y2="0.3"><stop offset="0" stop-color="#8a6cec"/><stop offset="0.55" stop-color="#6c7cf0"/><stop offset="1" stop-color="#4fc2ea"/></linearGradient></defs><circle cx="32.5" cy="32" r="29" fill="#e9eafa" stroke="url(#aig)" stroke-width="3.8"/><path d="M15.5 40.5 L24.5 22.5 Q25.3 21.5 26.5 21.5 H29.5 Q31 21.5 31.3 23 L36 40.5 Q36.2 42.5 34.5 42.5 H30.5 Q29.2 42.5 29 41 L27.5 30 L22.3 37.5 H26 L25.5 42.5 H17 Q15 42.5 15.5 40.5 Z" fill="#566bea"/><path d="M40.5 30.5 Q40.8 29 42.3 29 H45.5 Q47 29 46.8 30.5 L45.8 41 Q45.6 42.5 44 42.5 H41 Q39.5 42.5 39.6 41 Z" fill="#566bea"/><circle cx="43.5" cy="23.5" r="3.1" fill="#566bea"/></svg>
<!-- ===== BOTTOM PANEL ===== -->
<svg class="a" style="left:60px;top:1510px" width="40" height="38" viewBox="0 0 40 38"><path d="M14.4 11 A5.6 5 0 0 1 25.6 11" fill="none" stroke="#6b6b6b" stroke-width="2.2"/><path d="M18 31 Q10.5 28 10.5 19 V15 Q10.5 11.8 14 11.8 H25 Q28.5 11.8 28.5 15 V18" fill="none" stroke="#6b6b6b" stroke-width="2.2"/><path d="M19.7 11.8 V19.5" stroke="#6b6b6b" stroke-width="2.2"/><path d="M7.4 13.4 L10 16.4 M6.8 27.9 L10.4 24 M32.5 13 L29.5 17.5" stroke="#6b6b6b" stroke-width="2.2" stroke-linecap="round"/><path d="M22.2 21.4 H33 M22.2 26.1 H33 M22.2 30.5 H33" stroke="#6b6b6b" stroke-width="2.5" stroke-linecap="round"/></svg>
<div class="a" style="left:108px;top:1509px;font-size:23px;line-height:40px;color:#000">调试信息</div>
<svg class="a" style="left:245px;top:1517px" width="29" height="24" viewBox="0 0 29 24"><rect x="1" y="1.5" width="3.5" height="3.5" fill="#777"/><rect x="1" y="10.2" width="3.5" height="3.5" fill="#777"/><rect x="1" y="19" width="3.5" height="3.5" fill="#777"/><path d="M8 3.2 H28 M8 12 H28 M8 20.8 H28" stroke="#777" stroke-width="3.2"/></svg>
<div class="a" style="left:291px;top:1509px;font-size:24px;line-height:40px;color:#000">问题</div>
<div class="a" style="left:320px;top:1488px;width:39px;height:35px;border-radius:50%;background:#e06f6f;border:2px solid #fff"></div>
<div class="a" style="left:320px;top:1486px;width:39px;text-align:center;font-size:24px;line-height:40px;color:#fff;font-weight:bold">1</div>
<div class="a" style="left:40px;top:1557px;font-size:24px;line-height:40px;color:#000">查看资源「教师表」详情</div>
</body></html>
